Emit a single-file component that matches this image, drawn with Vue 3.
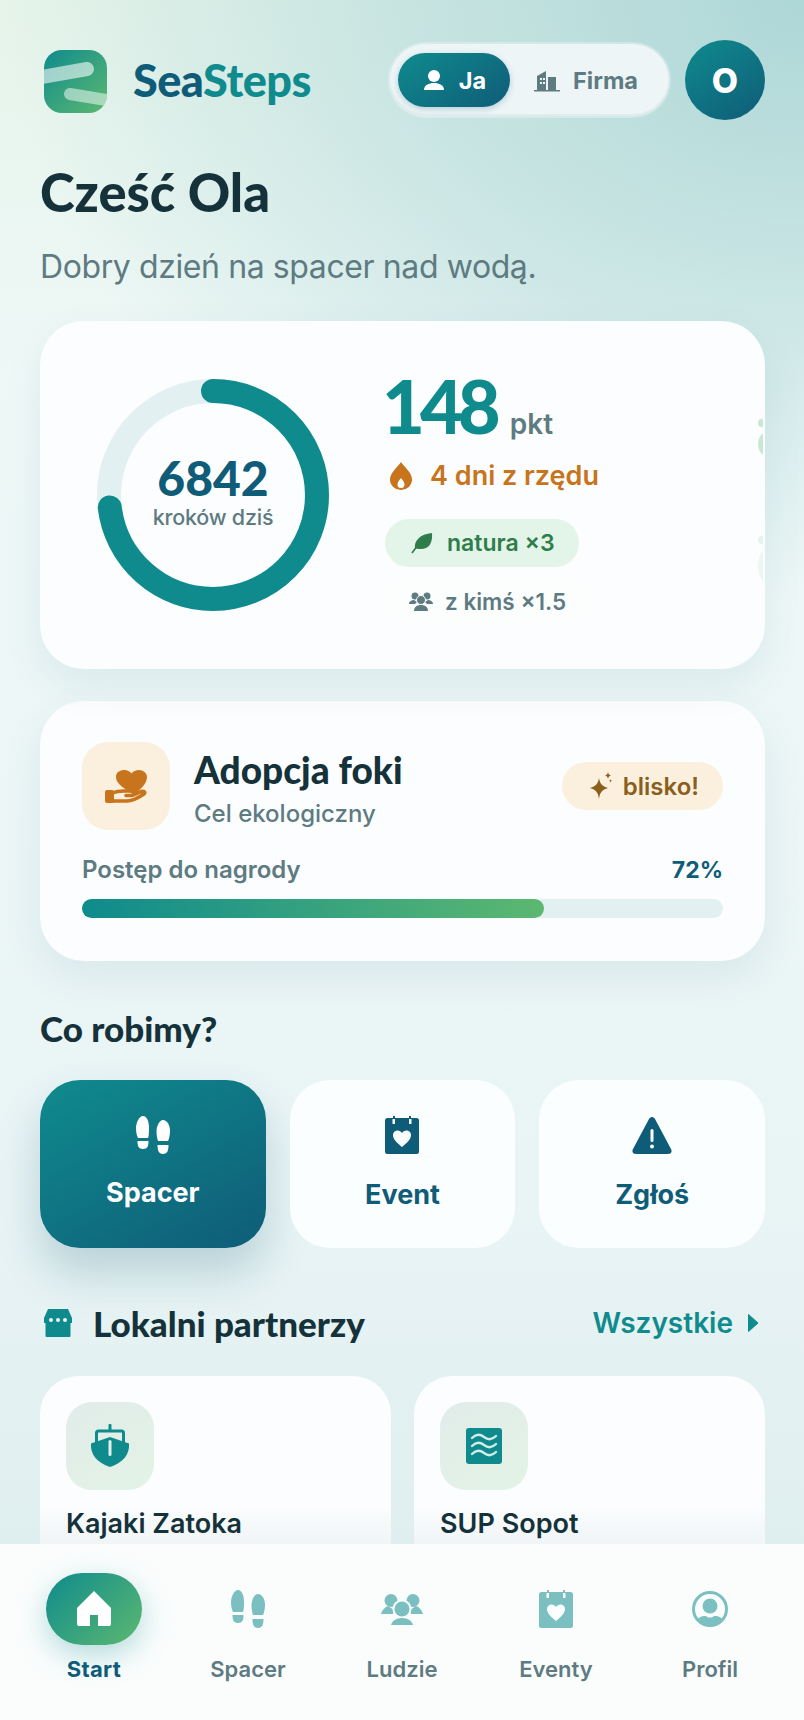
<template>
  <div class="screen">
    <main class="page">
      <header class="top">
        <div class="logo">
          <svg viewBox="0 0 63 63" width="63" height="63">
            <defs>
              <linearGradient id="logoGrad" x1="0" y1="0" x2="1" y2="1">
                <stop offset="0" stop-color="#0f8b8d" />
                <stop offset="1" stop-color="#5cb870" />
              </linearGradient>
              <clipPath id="logoClip"><rect width="63" height="63" rx="18" /></clipPath>
            </defs>
            <rect width="63" height="63" rx="18" fill="url(#logoGrad)" />
            <g clip-path="url(#logoClip)" stroke="#fff" stroke-linecap="round" fill="none">
              <path d="M-8 28 L43 19" stroke-width="14" opacity=".58" />
              <path d="M26 44 L74 52" stroke-width="12" opacity=".5" />
            </g>
          </svg>
        </div>
        <div class="brand"><span class="sea">Sea</span><span class="steps">Steps</span></div>
        <div class="toggle">
          <button class="tab on">
            <svg viewBox="0 0 24 24" width="24" height="24"><circle cx="12" cy="8" r="6" fill="currentColor" /><path d="M2 22c0-5 5-7 10-7s10 2 10 7z" fill="currentColor" /></svg>
            Ja
          </button>
          <button class="tab">
            <svg viewBox="0 0 26 24" width="26" height="24" fill="currentColor"><path d="M3 22V8l9-5v19zM14 9h8v13h-8z" /><path d="M0 22h26v1.5H0z" /><path d="M6 10h2v2H6zm3 0h2v2H9zm-3 4h2v2H6zm3 0h2v2H9z" fill="#edf5f7" /></svg>
            Firma
          </button>
        </div>
        <div class="avatar">O</div>
      </header>

      <h1 class="hello">Cześć Ola</h1>
      <p class="sub">Dobry dzień na spacer nad wodą.</p>

      <section class="card today">
        <div class="ghost">
          <i class="dot" /><i class="sole" />
          <i class="dot faint" /><i class="sole faint" />
        </div>
        <div class="ring">
          <svg viewBox="0 0 232 232" width="232" height="232">
            <circle cx="116" cy="116" r="104" fill="none" stroke="#e3f0f1" stroke-width="24" />
            <circle
              cx="116" cy="116" r="104" fill="none" stroke="#0f8b8d" stroke-width="24" stroke-linecap="round"
              :stroke-dasharray="`${ringLen} ${ringFull}`" transform="rotate(-90 116 116)"
            />
          </svg>
          <div class="ring-text">
            <b>6842</b>
            <span>kroków dziś</span>
          </div>
        </div>
        <div class="stats">
          <div class="points"><b>148</b><span>pkt</span></div>
          <div class="streak">
            <svg viewBox="0 0 24 28" width="24" height="28"><path fill-rule="evenodd" d="M12 0c2 4 11 10 11 17.500a11 10.500 0 0 1-22 0C1 10 10 4 12 0zm0 16c-1.500 2-3.500 4-3.500 6.500a3.500 3.500 0 0 0 7 0C15.500 20 13.500 18 12 16z" fill="currentColor" /></svg>
            4 dni z rzędu
          </div>
          <div class="chip green">
            <svg viewBox="0 0 22 22" width="22" height="22"><path d="M21 1c1 11-4 17-13 16-2 0-4-1-4-1C3 9 9 2 21 1z" fill="currentColor" /><path d="M1 21C5 15 9 11 14 8" stroke="currentColor" stroke-width="1.600" fill="none" /></svg>
            natura ×3
          </div>
          <div class="chip plain">
            <svg viewBox="0 0 24 20" width="24" height="20" fill="currentColor"><circle cx="6" cy="5" r="3.500" /><circle cx="18" cy="5" r="3.500" /><path d="M0 13c0-3 3-4 5-4l3 2-2 2zM24 13c0-3-3-4-5-4l-3 2 2 2z" /><circle cx="12" cy="9" r="4.500" stroke="#fbfdfd" /><path d="M5 20c0-4 3-6 7-6s7 2 7 6z" /></svg>
            z kimś ×1.5
          </div>
        </div>
      </section>

      <section class="card goal">
        <div class="goal-head">
          <div class="goal-icon">
            <svg viewBox="0 0 42 33" width="42" height="33">
              <path d="M26 23C17 17 11 13 11 7c0-5 4-7 8.500-7 2.500 0 5.500 1.500 7 3.500C28 1.500 31 0 34 0c4 0 8 3 8 7 0 7-7 13-12 16z" fill="#c8741c" />
              <rect x="0" y="20" width="9" height="13" rx="2" fill="#c8741c" />
              <g fill="none" stroke="#c8741c" stroke-width="3.600" stroke-linecap="round">
                <path d="M8 23c4-2 8-2 11-2h7c3 0 3.500 4.500.5 4.500H21" />
                <path d="M8 31h14c6 0 11-3 17-7 2-1.500 0-3.500-3-2.500l-7 3" />
              </g>
            </svg>
          </div>
          <div class="goal-title">
            <h2>Adopcja foki</h2>
            <p>Cel ekologiczny</p>
          </div>
          <div class="close">
            <svg viewBox="0 0 24 28" width="24" height="28" fill="currentColor"><path d="M10 6c1 6 3 8 9 10-6 2-8 4-9 11-1-7-3-9-9-11 6-2 8-4 9-10z" /><path d="M19 0c.3 2 1 3 3 3.500-2 .5-2.700 1.500-3 3.500-.3-2-1-3-3-3.500 2-.5 2.700-1.500 3-3.500z" /><path d="M21.500 7c.2 1 .5 1.500 1.500 1.800-1 .3-1.300.8-1.500 1.800-.2-1-.5-1.500-1.500-1.800 1-.3 1.300-.8 1.500-1.800z" /></svg>
            blisko!
          </div>
        </div>
        <div class="progress-label"><span>Postęp do nagrody</span><b>72%</b></div>
        <div class="bar"><div class="fill" :style="{ width: progress + '%' }" /></div>
      </section>

      <h3 class="section-title">Co robimy?</h3>
      <div class="actions">
        <button class="action primary">
          <svg viewBox="0 0 34 38" width="34" height="38" fill="currentColor"><path d="M7 0c4 0 6 6 6 12s-.5 9-1 10H2c-1-2-2-5-2-10S3 0 7 0z" /><path d="M1.500 25h11c0 5-1 8-5.500 8S1.500 30 1.500 25z" /><path d="M27 4c4 0 7 5 7 11 0 4-1 8-2 10H22c-1-3-1.500-6-1.500-10S23 4 27 4z" /><path d="M21.500 29h11c0 5-1 9-5.500 9s-5.500-4-5.500-9z" /></svg>
          <span>Spacer</span>
        </button>
        <button class="action">
          <svg viewBox="0 0 34 38" width="34" height="38">
            <path fill="currentColor" d="M8 0h2v4H8zm16 0h2v4h-2z" />
            <rect y="2" width="34" height="36" rx="2.500" fill="currentColor" />
            <rect x="7.500" y="3" width="2.500" height="5" fill="#fbfefe" /><rect x="24" y="3" width="2.500" height="5" fill="#fbfefe" />
            <path d="M17 31c-4-3.500-9-7-9-12 0-5.500 7-6 9-2 2-4 9-3.500 9 2 0 5-5 8.500-9 12z" fill="#fbfefe" />
          </svg>
          <span>Event</span>
        </button>
        <button class="action">
          <svg viewBox="0 0 40 38" width="40" height="38">
            <path d="M20 1c1.500 0 2.500 1 3 2l16 30c1.500 2.500 0 5-3 5H4c-3 0-4.500-2.500-3-5L17 3c.5-1 1.500-2 3-2z" fill="currentColor" />
            <rect x="18.500" y="13" width="3" height="13" rx="1.500" fill="#fbfefe" /><circle cx="20" cy="30.500" r="2" fill="#fbfefe" />
          </svg>
          <span>Zgłoś</span>
        </button>
      </div>

      <div class="partners-head">
        <svg class="shop" viewBox="0 0 28 28" width="28" height="28">
          <path d="M4 0h20l4 9v5H0V9z" fill="#0f8b8d" />
          <rect x="1.500" y="12" width="25" height="16" rx="1" fill="#0f8b8d" />
          <circle cx="7" cy="11" r="2" fill="#eaf5f5" /><circle cx="14" cy="11" r="2" fill="#eaf5f5" /><circle cx="21" cy="11" r="2" fill="#eaf5f5" />
        </svg>
        <h3>Lokalni partnerzy</h3>
        <a class="all">Wszystkie
          <svg viewBox="0 0 12 20" width="12" height="20"><path d="M1.500 1.500L11 10l-9.500 8.500z" fill="currentColor" stroke="currentColor" stroke-linejoin="round" /></svg>
        </a>
      </div>

      <div class="partners">
        <div class="card partner">
          <div class="partner-icon">
            <svg viewBox="0 0 40 44" width="40" height="44" fill="#0f8b8d">
              <rect x="18.500" y="0" width="3" height="7" rx="1" />
              <rect x="6.500" y="7" width="27" height="14" rx="2" fill="none" stroke="#0f8b8d" stroke-width="3" />
              <path d="M20 13l19 6.500C40 30 33 39 20 43 7 39 0 30 1 19.500z" />
              <rect x="18.500" y="16" width="3" height="16" rx="1.500" fill="#e4efeb" />
            </svg>
          </div>
          <div class="partner-name">Kajaki Zatoka</div>
        </div>
        <div class="card partner">
          <div class="partner-icon">
            <svg viewBox="0 0 36 36" width="36" height="36">
              <rect width="36" height="36" rx="3" fill="#0f8b8d" />
              <g fill="none" stroke="#d6ecea" stroke-width="2.400" stroke-linecap="round">
                <path d="M6 10c4-4 8-4 12-1s8 3 12-1" />
                <path d="M6 18c4-4 8-4 12-1s8 3 12-1" />
                <path d="M6 26c4-4 8-4 12-1s8 3 12-1" />
              </g>
            </svg>
          </div>
          <div class="partner-name">SUP Sopot</div>
        </div>
      </div>
    </main>

    <nav class="nav">
      <div class="nav-item active">
        <div class="home-pill">
          <svg viewBox="0 0 34 36" width="34" height="36"><path fill-rule="evenodd" d="M17 0l17 17v16a2 2 0 0 1-2 2H2a2 2 0 0 1-2-2V17zM13 24v11h8V24z" fill="#fff" /></svg>
        </div>
        <span>Start</span>
      </div>
      <div class="nav-item">
        <svg viewBox="0 0 34 38" width="34" height="38" fill="currentColor" class="nav-icon"><path d="M7 0c4 0 6 6 6 12s-.5 9-1 10H2c-1-2-2-5-2-10S3 0 7 0z" /><path d="M1.500 25h11c0 5-1 8-5.500 8S1.500 30 1.500 25z" /><path d="M27 4c4 0 7 5 7 11 0 4-1 8-2 10H22c-1-3-1.500-6-1.500-10S23 4 27 4z" /><path d="M21.500 29h11c0 5-1 9-5.500 9s-5.500-4-5.500-9z" /></svg>
        <span>Spacer</span>
      </div>
      <div class="nav-item">
        <svg viewBox="0 0 42 32" width="42" height="32" fill="currentColor" class="nav-icon">
          <circle cx="10" cy="7.500" r="6.500" /><circle cx="32" cy="7.500" r="6.500" />
          <path d="M0 21c1-4 4-7 7-8l6 4-1 4z" /><path d="M42 21c-1-4-4-7-7-8l-6 4 1 4z" />
          <circle cx="21" cy="16" r="9.500" fill="#fbfdfd" /><circle cx="21" cy="16" r="7.500" />
          <path d="M10 32c1-4 5-7 11-7s10 3 11 7z" />
        </svg>
        <span>Ludzie</span>
      </div>
      <div class="nav-item">
        <svg viewBox="0 0 34 38" width="34" height="38" class="nav-icon">
          <path fill="currentColor" d="M8 0h2v4H8zm16 0h2v4h-2z" />
          <rect y="2" width="34" height="36" rx="2.500" fill="currentColor" />
          <rect x="7.500" y="3" width="2.500" height="5" fill="#fbfefe" /><rect x="24" y="3" width="2.500" height="5" fill="#fbfefe" />
          <path d="M17 31c-4-3.500-9-7-9-12 0-5.500 7-6 9-2 2-4 9-3.500 9 2 0 5-5 8.500-9 12z" fill="#fbfefe" />
        </svg>
        <span>Eventy</span>
      </div>
      <div class="nav-item">
        <svg viewBox="0 0 36 36" width="36" height="36" class="nav-icon"><circle cx="18" cy="18" r="16.500" fill="none" stroke="currentColor" stroke-width="3" /><circle cx="18" cy="15" r="7.500" fill="currentColor" /><path d="M5 29c3-4 6-4 9-4 2 2 6 2 8 0 3 0 6 0 9 4-3 4-8 6-13 6s-10-2-13-6z" fill="currentColor" /></svg>
        <span>Profil</span>
      </div>
    </nav>
  </div>
</template>

<script setup>
const progress = 72

// ring goes around a 104px radius circle, filled to about 73%
const ringFull = 2 * Math.PI * 104
const ringLen = ringFull * 0.73
</script>

<style>
html, body {
  margin: 0;
  padding: 0;
}
</style>

<style scoped>
.screen {
  width: 804px;
  height: 1720px;
  display: flex;
  flex-direction: column;
  overflow: hidden;
  font-family: Inter, "Noto Sans", sans-serif;
  color: #15323a;
  background:
    radial-gradient(ellipse 800px 600px at 100% 0%, #aed7d8 0%, rgba(174, 215, 216, .55) 50%, rgba(174, 215, 216, 0) 100%),
    linear-gradient(180deg, #e6f4ea 0%, #eef8f7 22%, #e9f4f5 70%, #dfeeee 90%);
}

.page {
  flex: 1;
  min-height: 0;
  overflow: hidden;
  padding: 40px 39px 0 40px;
}

.top {
  display: flex;
  align-items: center;
  height: 80px;
}

.logo {
  width: 63px;
  height: 63px;
  margin-left: 4px;
  margin-top: 2px;
}

.brand {
  margin-left: 26px;
  font-family: Lato, sans-serif;
  font-weight: 900;
  font-size: 45px;
  letter-spacing: -.5px;
}

.sea {
  color: #0f5c78;
}

.steps {
  color: #0f8b8d;
}

.toggle {
  margin-left: auto;
  margin-right: 2px;
  display: flex;
  align-items: center;
  height: 72px;
  width: 279px;
  box-sizing: border-box;
  padding: 0 8px;
  gap: 24px;
  border-radius: 36px;
  background: #edf5f7;
  box-shadow: 0 0 0 2px rgba(255, 255, 255, .3), inset 0 -2px 0 rgba(200, 220, 222, .35);
}

.tab {
  display: flex;
  align-items: center;
  gap: 13px;
  height: 54px;
  padding: 0;
  border: 0;
  background: none;
  font: 700 23.500px Inter, sans-serif;
  color: #5e7b82;
}

.tab.on {
  width: 112px;
  justify-content: center;
  border-radius: 27px;
  color: #fff;
  background: linear-gradient(145deg, #0f8b8d, #0f5c78);
  box-shadow: 0 2px 6px rgba(15, 92, 120, .25);
}

.avatar {
  width: 80px;
  height: 80px;
  margin-left: 14px;
  border-radius: 50%;
  display: flex;
  align-items: center;
  justify-content: center;
  color: #fff;
  font: 800 34px Inter, sans-serif;
  background: linear-gradient(145deg, #0f8b8d, #0f5c78);
}

.hello {
  margin: 40px 0 0;
  font-family: Lato, sans-serif;
  font-weight: 900;
  font-size: 52.500px;
  line-height: 64px;
  color: #15323a;
}

.sub {
  margin: 23px 0 0;
  font-size: 32px;
  line-height: 40px;
  color: #5e7b82;
  letter-spacing: -.4px;
}

.card {
  background: #fbfdfe;
  border-radius: 44px;
  box-shadow: 0 16px 40px rgba(15, 92, 120, .08);
}

.today {
  position: relative;
  overflow: hidden;
  margin-top: 34px;
  height: 348px;
  display: flex;
  align-items: center;
  padding-left: 57px;
  gap: 56px;
}

.ghost {
  position: absolute;
  left: 718px;
  top: 98px;
  width: 5px;
  overflow: hidden;
}

.dot {
  display: block;
  width: 8px;
  height: 8px;
  border-radius: 50%;
  background: #c9e8d2;
}

.sole {
  display: block;
  width: 18px;
  height: 24px;
  margin-top: 5px;
  border-radius: 50%;
  background: #c9e8d2;
}

.dot.faint {
  margin-top: 80px;
  background: #e7f4ec;
}

.sole.faint {
  height: 34px;
  background: #edf6f0;
}

.ring {
  position: relative;
  width: 232px;
  height: 232px;
}

.ring-text {
  position: absolute;
  inset: 0;
  padding-bottom: 8px;
  box-sizing: border-box;
  display: flex;
  flex-direction: column;
  align-items: center;
  justify-content: center;
}

.ring-text b {
  font-family: Lato, sans-serif;
  font-weight: 900;
  font-size: 48px;
  line-height: 52px;
  color: #0f5c78;
}

.ring-text span {
  font-size: 21.500px;
  font-weight: 500;
  line-height: 26px;
  color: #5e7b82;
  letter-spacing: -.2px;
}

.stats {
  display: flex;
  flex-direction: column;
  align-items: flex-start;
  margin-top: 6px;
}

.points {
  display: flex;
  align-items: baseline;
  gap: 14px;
}

.points b {
  margin-left: -3px;
  font-family: Lato, sans-serif;
  font-weight: 900;
  font-size: 74px;
  line-height: 70px;
  letter-spacing: -5px;
  color: #0f8b8d;
}

.points span {
  font-size: 28px;
  font-weight: 600;
  color: #5e7b82;
}

.streak {
  display: flex;
  align-items: center;
  gap: 17px;
  margin-top: 18px;
  margin-left: 4px;
  font-size: 27px;
  font-weight: 600;
  color: #c8741c;
}

.chip {
  display: flex;
  align-items: center;
  gap: 14px;
  height: 48px;
  border-radius: 24px;
  padding: 0 24px 0 26px;
  font-size: 23px;
  font-weight: 600;
  box-sizing: border-box;
}

.green {
  margin-top: 27px;
  background: #e3f4e9;
  color: #2e7d4a;
}

.plain {
  margin-top: 10px;
  padding: 0 24px;
  gap: 12px;
  font-size: 22.500px;
  background: #fcfefe;
  color: #5e7b82;
}

.goal {
  margin-top: 32px;
  height: 260px;
  box-sizing: border-box;
  padding: 41px 42px 0;
}

.goal-head {
  display: flex;
  align-items: center;
}

.goal-icon {
  width: 88px;
  height: 88px;
  border-radius: 26px;
  background: #fbf0de;
  display: flex;
  align-items: center;
  justify-content: center;
}

.goal-title {
  margin-left: 24px;
  margin-top: 5px;
}

.goal-title h2 {
  margin: 0;
  font-family: Lato, sans-serif;
  font-weight: 900;
  font-size: 37px;
  line-height: 46px;
}

.goal-title p {
  margin: 5px 0 0;
  font-size: 24px;
  font-weight: 500;
  line-height: 32px;
  color: #5e7b82;
}

.close {
  margin-left: auto;
  display: flex;
  align-items: center;
  gap: 10px;
  height: 48px;
  padding: 0 24px 0 27px;
  border-radius: 24px;
  background: #fbf0de;
  color: #8a5f1c;
  font-size: 24px;
  font-weight: 600;
}

.progress-label {
  display: flex;
  justify-content: space-between;
  margin-top: 24px;
  font-size: 24px;
  line-height: 32px;
  font-weight: 600;
  color: #5e7b82;
}

.progress-label b {
  color: #0f5c78;
  font-size: 23px;
  font-weight: 700;
}

.bar {
  margin-top: 13px;
  height: 19px;
  border-radius: 10px;
  background: #e3f0f1;
}

.fill {
  height: 100%;
  border-radius: 10px;
  background: linear-gradient(90deg, #0f8b8d, #5cb870);
}

.section-title {
  margin: 44px 0 0;
  font-family: Lato, sans-serif;
  font-weight: 900;
  font-size: 35px;
  line-height: 46px;
}

.actions {
  display: grid;
  grid-template-columns: repeat(3, 1fr);
  gap: 24px;
  margin-top: 29px;
}

.action {
  height: 168px;
  border: 0;
  border-radius: 40px;
  background: #fbfefe;
  color: #0f5c78;
  display: flex;
  flex-direction: column;
  align-items: center;
  padding: 36px 0 0;
  font: 700 27px Inter, sans-serif;
}

.action span {
  margin-top: 24px;
}

.action.primary {
  color: #fff;
  background: linear-gradient(150deg, #0f8b8d, #0f5c78);
  box-shadow: 0 24px 44px rgba(15, 92, 120, .22);
}

.action.primary span {
  margin-top: 22px;
}

.partners-head {
  display: flex;
  align-items: center;
  margin-top: 52px;
  height: 46px;
}

.shop {
  margin-left: 4px;
}

.partners-head h3 {
  margin: 0 0 0 21px;
  font-family: Lato, sans-serif;
  font-weight: 900;
  font-size: 35px;
}

.all {
  margin-left: auto;
  margin-right: 6px;
  display: flex;
  align-items: center;
  gap: 14px;
  font-size: 28px;
  font-weight: 600;
  color: #0f8b8d;
}

.partners {
  display: grid;
  grid-template-columns: repeat(2, 1fr);
  gap: 23px;
  margin-top: 30px;
}

.partner {
  height: 260px;
  border-radius: 38px;
  padding: 26px;
  box-sizing: border-box;
  background: linear-gradient(180deg, #fbfdfe 0%, #fbfdfe 50%, #eef3f5 68%);
  box-shadow: none;
}

.partner-icon {
  width: 88px;
  height: 88px;
  border-radius: 26px;
  background: linear-gradient(145deg, #e1ece9, #e3f3e6);
  display: flex;
  align-items: center;
  justify-content: center;
}

.partner-name {
  margin-top: 16px;
  font-size: 27px;
  line-height: 36px;
  font-weight: 600;
  color: #15323a;
}

.nav {
  position: relative;
  height: 176px;
  flex: none;
  box-sizing: border-box;
  padding: 0 17px;
  display: grid;
  grid-template-columns: repeat(5, 154px);
  background: #fbfdfd;
}

.nav-item {
  display: flex;
  flex-direction: column;
  align-items: center;
  padding-top: 29px;
  color: #7bbfc0;
}

.nav-icon {
  height: 40px;
  margin-top: 16px;
  margin-bottom: 25px;
}

.nav-item span {
  font-size: 22px;
  font-weight: 600;
  line-height: 30px;
  color: #5e7b82;
}

.home-pill {
  width: 96px;
  height: 72px;
  border-radius: 36px;
  background: linear-gradient(135deg, #0f8b8d, #5cb870);
  box-shadow: 0 10px 30px rgba(15, 139, 141, .3);
  display: flex;
  align-items: center;
  justify-content: center;
  margin-bottom: 9px;
}

.active span {
  color: #0f5c78;
  font-weight: 700;
  letter-spacing: .3px;
}
</style>
